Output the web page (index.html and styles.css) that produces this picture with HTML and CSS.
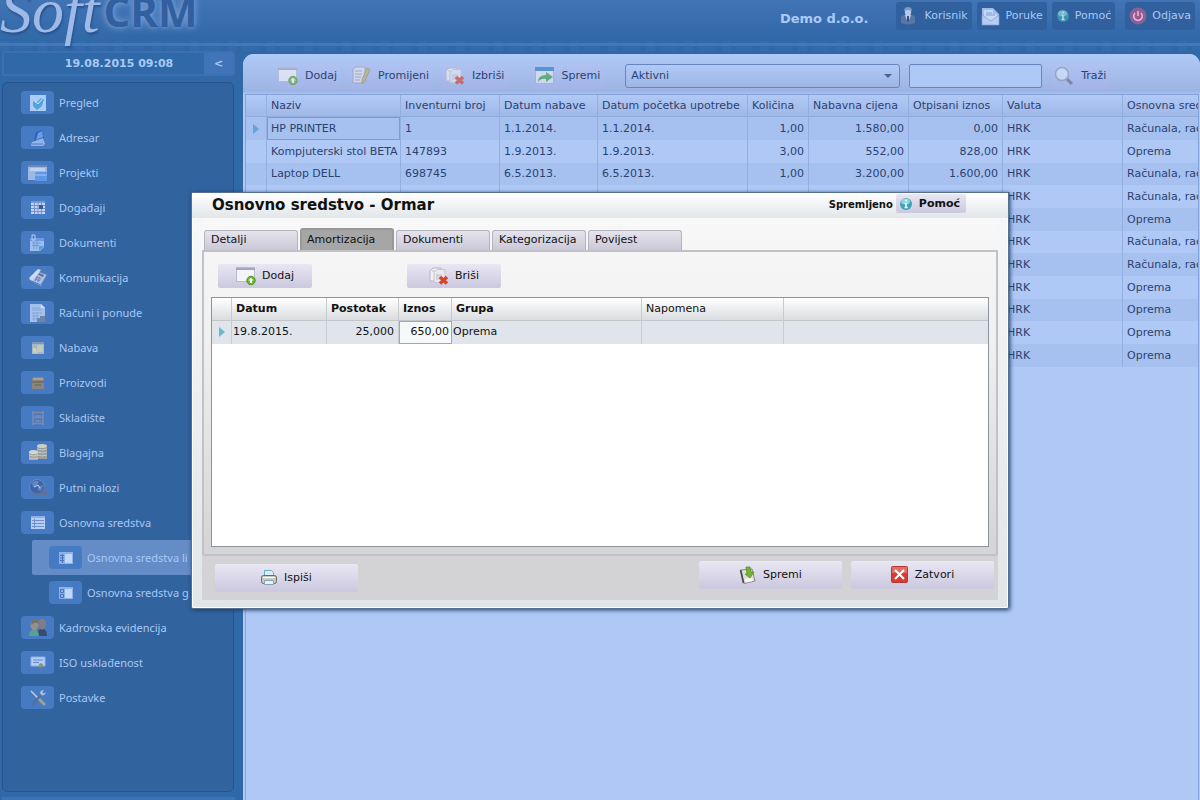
FILE: index.html
```
<!DOCTYPE html>
<html lang="hr">
<head>
    <meta charset="UTF-8">
    <meta name="viewport" content="width=device-width, initial-scale=1.0">
    <title>Soft CRM</title>
    <link rel="stylesheet" href="styles.css">
</head>
<body>
    <!-- shared icons -->
    <svg class="sprite" aria-hidden="true">
        <symbol id="i-add" viewBox="0 0 20 18">
            <rect x="0.5" y="0.5" width="18" height="14" fill="#f4f5fa" stroke="#b9bccb"/>
            <path d="M0 1h19v2H0z" fill="#a3a5b8"/>
            <circle cx="15" cy="13.5" r="4.2" fill="#6cb82f" stroke="#4a9418"/>
            <path d="M15 10.8l2.6 2.7h-1.6v2.4h-2v-2.4h-1.6z" fill="#fff"/>
        </symbol>
        <symbol id="i-delete" viewBox="0 0 20 18">
            <path d="M1 4l3-3h8v13H1z" fill="#f1f1f5" stroke="#b4b4c0"/>
            <path d="M5 5.500l3-3h8v13H5z" fill="#e8e8ee" stroke="#c4c4ce"/>
            <path d="M3 4h3M7 8h6M7 10h6M7 12h4" stroke="#bcbcc8"/>
            <path d="M11 10l7 6.500M18 10l-7 6.500" stroke="#dc4329" stroke-width="3.500"/>
        </symbol>
        <symbol id="i-info" viewBox="0 0 14 14">
            <circle cx="7" cy="7" r="6" fill="#3fa3b8"/>
            <ellipse cx="6.500" cy="4.500" rx="4.500" ry="3" fill="#8fd3dc"/>
            <path d="M7 6v4.500M5.800 6.500H7M5.600 10.500h3" stroke="#fff" stroke-width="1.400"/>
            <circle cx="7.200" cy="3.600" r="1" fill="#fff"/>
        </symbol>
    </svg>

    <header class="top">
        <div class="logo"><span class="logo-soft">Soft</span><span class="logo-crm">CRM</span></div>
        <strong class="company">Demo d.o.o.</strong>
        <nav class="top-nav">
            <button type="button" class="user">
                <svg width="16" height="18" viewBox="0 0 16 18"><path d="M1 10q1-2 4-2h6q3 0 4 2v6q-7 3-14 0z" fill="#5877a6"/><path d="M5 8h6l-3 8z" fill="#c5d6f2"/><path d="M7 9h2v5l-1 2-1-2z" fill="#35507f"/><ellipse cx="8" cy="5" rx="3.200" ry="4" fill="#b5c8ea"/><path d="M4 4q0-4 4-4t4 4q-4-2-8 0z" fill="#7d97c2"/></svg>
                Korisnik
            </button>
            <button type="button">
                <svg width="20" height="19" viewBox="0 0 20 19"><path d="M1 1h11l6 6v11H1z" fill="#9fbdea"/><path d="M3 3h9v4h4v6H3z" fill="#c4d8f6"/><path d="M5 6h6M5 8h9" stroke="#7f9fd3"/><path d="M1 8l9 6 8-6v10H1z" fill="#b5cdf3" stroke="#7f9fd3" stroke-width=".7"/></svg>
                Poruke
            </button>
            <button type="button">
                <svg width="14" height="14" opacity=".75"><use href="#i-info"/></svg>
                Pomoć
            </button>
            <button type="button" class="logout">
                <svg width="18" height="18" viewBox="0 0 18 18"><circle cx="9" cy="9" r="8.500" fill="#77689f"/><circle cx="9" cy="9" r="7" fill="#a3568a"/><path d="M6 6a4.300 4.300 0 1 0 6 0M9 4v5" fill="none" stroke="#c9c8ec" stroke-width="1.500"/></svg>
                Odjava
            </button>
        </nav>
    </header>

    <div class="layout">
        <aside class="side">
            <div class="date-bar">
                <time datetime="2015-08-19T09:08">19.08.2015 09:08</time>
                <button type="button">&lt;</button>
            </div>
            <ul class="menu">
                <li><a href="#"><span class="tile"><svg width="18" height="18" viewBox="0 0 18 18"><path d="M1 1h16v16H1z" fill="#a9cdf5"/><path d="M4 7l3 2 5-5 3 1-2 7-5 4-4-4z" fill="#54a1de"/><path d="M6 7l3 3 5-6" fill="none" stroke="#d1e6fb"/></svg></span>Pregled</a></li>
                <li><a href="#"><span class="tile"><svg width="18" height="18" viewBox="0 0 18 18"><path d="M7 3l6-2 2 9-11 5z" fill="#2d62c0"/><path d="M9 4l4-2 1 6-7 3z" fill="#6b9ce6"/><path d="M3 13l11-4 2 6-2 2H2z" fill="#92b3e6"/><path d="M3 15h11" stroke="#5b7db8"/></svg></span>Adresar</a></li>
                <li><a href="#"><span class="tile"><svg width="20" height="18" viewBox="0 0 20 18"><path d="M0 1h19v15H0z" fill="#9db8e2"/><path d="M0 1h19v2H0z" fill="#6f86b3"/><path d="M2 4h15v3H2z" fill="#bdd2f3"/><path d="M7 9l2-1h10v9H7z" fill="#5f97e8"/><path d="M7 10h12v2H7z" fill="#82b1f2"/></svg></span>Projekti</a></li>
                <li><a href="#"><span class="tile"><svg width="16" height="15" viewBox="0 0 16 15"><path d="M1 1h14v13H1z" fill="#c2d4f3"/><path d="M1 1h14v2H1z" fill="#7698d2"/><path d="M1 5.500h14M1 8.500h14M1 11.500h14M4.500 3v11M8 3v11M11.500 3v11" stroke="#7493ca"/><path d="M9 5h4v4H9z" fill="#3b5b98"/></svg></span>Događaji</a></li>
                <li><a href="#"><span class="tile"><svg width="17" height="18" viewBox="0 0 17 18"><path d="M1 4h14v9l-4 4H1z" fill="#9ebeee"/><path d="M1 4h14v3H1z" fill="#6e9be0"/><path d="M3 1h3v5H3z" fill="none" stroke="#b7cdf1"/><path d="M3 9h9M3 11.500h7M5 7v8M8 7v8" stroke="#7399d5"/><path d="M10 17v-5h5z" fill="#4aa2dc"/></svg></span>Dokumenti</a></li>
                <li><a href="#"><span class="tile"><svg width="20" height="19" viewBox="0 0 20 19"><path d="M8 3l11 4-6 11-12-6z" fill="#a9bfe5"/><path d="M1 10L10 1l3 1-9 11z" fill="#cddcf5"/><path d="M1 12l12 5 6-10" fill="none" stroke="#5d79aa"/><path d="M11 5l5 2-1 2-5-2z" fill="#7b6c84"/><path d="M8 9l5 2M7 11l5 2M9.500 8L7 13M12 9l-2.500 5" stroke="#6985ba"/></svg></span>Komunikacija</a></li>
                <li><a href="#"><span class="tile"><svg width="18" height="20" viewBox="0 0 18 20"><path d="M1 1h11l4 4v14H1z" fill="#a4c1ec"/><path d="M12 1v4h4" fill="#d2e1f8"/><path d="M3 5h8M3 7h10M3 10h10M3 13h7M3 16h5M5 9v9M8 9v9" stroke="#86a6db"/><path d="M8 15h3v-2h5v6H8z" fill="#7185a8"/></svg></span>Računi i ponude</a></li>
                <li><a href="#"><span class="tile"><svg width="14" height="14" viewBox="0 0 14 14"><path d="M1 1h12v12H1z" fill="#a7b8c9"/><path d="M1 1h12v2H1z" fill="#8196b8"/><path d="M2 7h3v5H2zM6 4h6v7H6z" fill="#c1cbb5"/><path d="M3 7l3 5M2 9h3" stroke="#ded9a2"/></svg></span>Nabava</a></li>
                <li><a href="#"><span class="tile"><svg width="14" height="14" viewBox="0 0 14 14"><path d="M2 1h10l1 2v10H1V3z" fill="#8c8579"/><path d="M2 2h10v2H2z" fill="#aaa18d"/><path d="M1 6h12M4 9h6" stroke="#615f66"/></svg></span>Proizvodi</a></li>
                <li><a href="#"><span class="tile"><svg width="12" height="14" viewBox="0 0 12 14"><path d="M1 0v14M11 0v14M1 1.500h10M1 6.500h10M1 12.500h10" fill="none" stroke="#8289a8" stroke-width="1.500"/><path d="M3 4h6v2H3zM3 9h6v2H3z" fill="#6d87b8"/></svg></span>Skladište</a></li>
                <li><a href="#"><span class="tile"><svg width="20" height="19" viewBox="0 0 20 19"><path d="M9 3v13h10V3z" fill="#979ea1"/><path d="M1 9v8h9V9z" fill="#a5aaa9"/><path d="M9 6q5 2 10 0M9 9q5 2 10 0M9 12q5 2 10 0M1 12q5 2 9 0M1 15q5 2 9 0" fill="none" stroke="#c6c8c2"/><ellipse cx="14" cy="3" rx="5" ry="2" fill="#cccdc5"/><ellipse cx="5.500" cy="9" rx="4.500" ry="2" fill="#d5d5cb"/></svg></span>Blagajna</a></li>
                <li><a href="#"><span class="tile"><svg width="20" height="19" viewBox="0 0 20 19"><circle cx="9" cy="9" r="7.500" fill="#3d65ad" stroke="#6e89ba"/><path d="M4 5q4-4 7-1l-3 4-3 1zM10 9l5-2-2 6-3-1z" fill="#6485c0"/><path d="M6 9l4-2 2 3" fill="none" stroke="#c8d7ef"/><path d="M5 15q8 4 12-6M14 15l4-1v3z" fill="none" stroke="#65708c" stroke-width="1.500"/></svg></span>Putni nalozi</a></li>
                <li><a href="#"><span class="tile"><svg width="14" height="13" viewBox="0 0 14 13"><path d="M0 0h14v13H0z" fill="#b8cdf2"/><path d="M0 0h14v2H0z" fill="#8fb0e5"/><path d="M1 4.500h12M1 7.500h12M1 10.500h12M3.500 3v9" stroke="#6c90cd"/></svg></span>Osnovna sredstva</a>
                    <ul class="submenu">
                        <li class="current"><a href="#"><span class="tile"><svg width="14" height="12" viewBox="0 0 14 12"><path d="M0 0h14v12H0z" fill="#8cb0e8"/><path d="M6 2h7v9H6z" fill="#c1d8fa"/><path d="M1 3.500h4M1 6h4M1 8.500h4M3.500 2v9" stroke="#4b75bb"/></svg></span>Osnovna sredstva li</a></li>
                        <li><a href="#"><span class="tile"><svg width="14" height="12" viewBox="0 0 14 12"><path d="M0 0h14v12H0z" fill="#8cb0e8"/><path d="M6 2h7v9H6z" fill="#c1d8fa"/><path d="M1.500 2.500h3v3h-3zM1.500 7.500h3v3h-3z" fill="none" stroke="#4b75bb"/></svg></span>Osnovna sredstva g</a></li>
                    </ul>
                </li>
                <li><a href="#"><span class="tile"><svg width="20" height="19" viewBox="0 0 20 19"><path d="M10 18q-1-5 2-7h4q3 2 3 7z" fill="#3a4b6b"/><ellipse cx="14" cy="6" rx="4" ry="5.500" fill="#837d83"/><path d="M1 18q0-6 5-6t5 6z" fill="#57a58e"/><ellipse cx="6.500" cy="7" rx="4" ry="5.500" fill="#968f8a"/><path d="M3 7q0-6 4-6t4 5q-4-3-8 1z" fill="#77716c"/></svg></span>Kadrovska evidencija</a></li>
                <li><a href="#"><span class="tile"><svg width="16" height="14" viewBox="0 0 16 14"><path d="M1 1h14v9H1z" fill="#b8cef2" stroke="#8fafe3"/><path d="M3 4h10M3 6.500h6" stroke="#648bcc"/><circle cx="11" cy="9.500" r="2.200" fill="#8d9180"/><path d="M10 11v3l1-1 1 1v-3z" fill="#777d77"/></svg></span>ISO usklađenost</a></li>
                <li><a href="#"><span class="tile"><svg width="18" height="18" viewBox="0 0 18 18"><path d="M2 2l9 9" stroke="#c1cee2" stroke-width="1.500"/><path d="M10 10l6 6" stroke="#9aa58a" stroke-width="3"/><path d="M3 16L13 5" stroke="#52709b" stroke-width="2.500"/><path d="M15 1q-4 0-4 3.500l2 2q3 0 4-3l-2.500 1-1-1z" fill="#a9c0e3"/></svg></span>Postavke</a></li>
            </ul>
            <div class="side-foot"></div>
        </aside>

        <main class="panel">
            <div class="toolbar">
                <button type="button" class="t-add"><svg width="20" height="18"><use href="#i-add"/></svg>Dodaj</button>
                <button type="button" class="t-edit"><svg width="19" height="19" viewBox="0 0 19 19"><path d="M1 3l3-2h9v16H1z" fill="#e3e5ec" stroke="#9a9eac"/><path d="M3 5h7M3 8h7M3 11h6M3 14h5" stroke="#9a9eac"/><path d="M15 2l3 1.500-5 11-3 3v-4z" fill="#c9b45a" stroke="#85805f" stroke-width=".7"/></svg>Promijeni</button>
                <button type="button" class="t-del"><svg width="20" height="18"><use href="#i-delete"/></svg>Izbriši</button>
                <button type="button" class="t-save"><svg width="19" height="17" viewBox="0 0 19 17"><path d="M.5.500h18v16H.5z" fill="#e6e9ef" stroke="#a8b0c0"/><path d="M0 0h19v4H0z" fill="#2f7fc4"/><path d="M3 15q0-7 8-7V5l7 5-7 5v-3q-5-1-8 3z" fill="#3aa648"/></svg>Spremi</button>
                <span class="select"><select aria-label="Status"><option>Aktivni</option></select></span>
                <input type="text" class="search" aria-label="Traži">
                <button type="button" class="t-find"><svg width="20" height="19" viewBox="0 0 20 19"><path d="M12 12l6 6" stroke="#686c86" stroke-width="3"/><circle cx="8" cy="8" r="6.500" fill="#d3e6f8" stroke="#8d99b4" stroke-width="1.500"/></svg>Traži</button>
            </div>

            <div class="grid-wrap">
                <table class="grid">
                    <colgroup>
                        <col class="w21"><col class="w134"><col class="w99"><col class="w98"><col class="w150"><col class="w61"><col class="w100"><col class="w94"><col class="w120"><col>
                    </colgroup>
                    <thead>
                        <tr><th></th><th>Naziv</th><th>Inventurni broj</th><th>Datum nabave</th><th>Datum početka upotrebe</th><th>Količina</th><th>Nabavna cijena</th><th>Otpisani iznos</th><th>Valuta</th><th>Osnovna sredstva</th></tr>
                    </thead>
                    <tbody>
                        <tr><td><i class="marker"></i></td><td class="focused">HP PRINTER</td><td>1</td><td>1.1.2014.</td><td>1.1.2014.</td><td class="num">1,00</td><td class="num">1.580,00</td><td class="num">0,00</td><td>HRK</td><td>Računala, računalna</td></tr>
                        <tr><td></td><td>Kompjuterski stol BETA</td><td>147893</td><td>1.9.2013.</td><td>1.9.2013.</td><td class="num">3,00</td><td class="num">552,00</td><td class="num">828,00</td><td>HRK</td><td>Oprema</td></tr>
                        <tr><td></td><td>Laptop DELL</td><td>698745</td><td>6.5.2013.</td><td>6.5.2013.</td><td class="num">1,00</td><td class="num">3.200,00</td><td class="num">1.600,00</td><td>HRK</td><td>Računala, računalna</td></tr>
                        <tr><td></td><td></td><td></td><td></td><td></td><td></td><td></td><td></td><td>HRK</td><td>Računala, računalna</td></tr>
                        <tr><td></td><td></td><td></td><td></td><td></td><td></td><td></td><td></td><td>HRK</td><td>Oprema</td></tr>
                        <tr><td></td><td></td><td></td><td></td><td></td><td></td><td></td><td></td><td>HRK</td><td>Računala, računalna</td></tr>
                        <tr><td></td><td></td><td></td><td></td><td></td><td></td><td></td><td></td><td>HRK</td><td>Računala, računalna</td></tr>
                        <tr><td></td><td></td><td></td><td></td><td></td><td></td><td></td><td></td><td>HRK</td><td>Oprema</td></tr>
                        <tr><td></td><td></td><td></td><td></td><td></td><td></td><td></td><td></td><td>HRK</td><td>Oprema</td></tr>
                        <tr><td></td><td></td><td></td><td></td><td></td><td></td><td></td><td></td><td>HRK</td><td>Oprema</td></tr>
                        <tr><td></td><td></td><td></td><td></td><td></td><td></td><td></td><td></td><td>HRK</td><td>Oprema</td></tr>
                    </tbody>
                </table>
            </div>
        </main>
    </div>

    <div class="overlay">
        <section class="modal" role="dialog" aria-labelledby="modalTitle">
            <div class="modal-head">
                <h2 id="modalTitle">Osnovno sredstvo - Ormar</h2>
                <span class="status">Spremljeno</span>
                <button type="button" class="btn help"><svg width="14" height="14"><use href="#i-info"/></svg>Pomoć</button>
            </div>
            <div class="modal-body">
                <div class="tabs" role="tablist">
                    <button type="button" role="tab">Detalji</button>
                    <button type="button" role="tab" class="active" aria-selected="true">Amortizacija</button>
                    <button type="button" role="tab">Dokumenti</button>
                    <button type="button" role="tab">Kategorizacija</button>
                    <button type="button" role="tab">Povijest</button>
                </div>
                <div class="tab-panel">
                    <div class="actions">
                        <button type="button" class="btn"><svg width="20" height="18"><use href="#i-add"/></svg>Dodaj</button>
                        <button type="button" class="btn"><svg width="20" height="18"><use href="#i-delete"/></svg>Briši</button>
                    </div>
                    <div class="items">
                        <table>
                            <colgroup>
                                <col class="w20"><col class="w95"><col class="w72"><col class="w53"><col class="w190"><col class="w142"><col>
                            </colgroup>
                            <thead>
                                <tr><th></th><th>Datum</th><th>Postotak</th><th>Iznos</th><th>Grupa</th><th class="plain">Napomena</th><th></th></tr>
                            </thead>
                            <tbody>
                                <tr><td><i class="marker"></i></td><td>19.8.2015.</td><td class="num">25,000</td><td class="num focused">650,00</td><td>Oprema</td><td></td><td></td></tr>
                            </tbody>
                        </table>
                    </div>
                </div>
                <div class="modal-foot">
                    <button type="button" class="btn print"><svg width="16" height="17" viewBox="0 0 16 17"><path d="M3.500 7V1.500h7l2 2V7z" fill="#d9effb" stroke="#6fa9c9"/><rect x=".5" y="6.500" width="15" height="8" rx="2" fill="#c9c9c5" stroke="#686868"/><path d="M2 8.500h12" stroke="#fff"/><path d="M3.500 11.500h9v4h-9z" fill="#e4f3fa" stroke="#85a5b5"/></svg>Ispiši</button>
                    <button type="button" class="btn"><svg width="17" height="18" viewBox="0 0 17 18"><path d="M2 4l11-1 3 12-11 2.500z" fill="#dededb" stroke="#888"/><path d="M1.500 4l3 13" stroke="#444" stroke-width="1.500"/><path d="M6 13l7-1.500 1 3.500-7 1.500z" fill="#f7f7f4"/><path d="M7 1h4l1 5h3l-4 6-5-4h2z" fill="#73b437" stroke="#4c8a20" stroke-width=".7"/></svg>Spremi</button>
                    <button type="button" class="btn"><svg width="17" height="17" viewBox="0 0 17 17"><rect x=".5" y=".5" width="16" height="16" rx="1" fill="#d93a33" stroke="#b03a33"/><path d="M1 1h15v6H1z" fill="#e56e63"/><path d="M4 4l9 9M13 4l-9 9" stroke="#fff" stroke-width="2"/></svg>Zatvori</button>
                </div>
            </div>
        </section>
    </div>
</body>
</html>
```
FILE: styles.css
```
* {
    box-sizing: border-box;
}
body {
    margin: 0;
    height: 100vh;
    display: flex;
    flex-direction: column;
    overflow: hidden;
    background: #3069a8;
    font-family: Verdana, "DejaVu Sans", sans-serif;
    font-size: 11px;
    line-height: 14px;
    color: #2b426f;
}
button, input, select {
    font: inherit;
    color: inherit;
}
button {
    display: flex;
    align-items: center;
    border: none;
    padding: 0;
    background: none;
    cursor: pointer;
}
svg {
    flex: none;
}
.sprite {
    position: absolute;
    width: 0;
    height: 0;
}

/* header */
.top {
    display: flex;
    align-items: flex-start;
    height: 54px;
    padding-right: 5px;
    background:
        linear-gradient(#4277b8, #4277b8) 0 43px / 100% 3px no-repeat,
        repeating-linear-gradient(90deg, #3c71b066 0 9px, transparent 9px 14px, #3c71b044 14px 31px, transparent 31px 38px) 0 41px / 100% 10px no-repeat,
        linear-gradient(#4174b5, #2f67a7 80%);
}
.logo {
    display: flex;
    align-items: flex-start;
    gap: 4px;
    line-height: 21px;
    white-space: nowrap;
}
.logo-soft {
    font-family: "Liberation Serif", serif;
    font-style: italic;
    font-size: 64px;
    color: #9fb9e8;
    text-shadow: 1px 2px 2px #28528c;
}
.logo-crm {
    font-family: "Open Sans", sans-serif;
    font-weight: bold;
    font-size: 42px;
    color: #315f9f;
    text-shadow: 0 0 4px #6f97d2, 0 0 8px #7fa3da;
}
.company {
    margin: 10px 27px 0 auto;
    font-size: 13px;
    line-height: 18px;
    color: #adc9f5;
}
.top-nav {
    display: flex;
    gap: 5px;
    padding-top: 2px;
}
.top-nav button {
    gap: 5px;
    height: 28px;
    padding: 0 4px;
    border-radius: 3px;
    background: #30609e;
    color: #a9c8f5;
}
.top-nav .user {
    gap: 9px;
}
.top-nav .logout {
    margin-left: 5px;
}

.layout {
    display: flex;
    flex: 1;
    min-height: 0;
}

/* sidebar */
.side {
    display: flex;
    flex-direction: column;
    flex: none;
    width: 243px;
    margin-top: -3px;
    padding: 0 8px 0 2px;
}
.date-bar {
    display: flex;
    height: 25px;
    border: 2px solid #3c70b2;
    border-radius: 3px;
    color: #a9c8f5;
    font-weight: bold;
    line-height: 21px;
}
.date-bar time {
    flex: 1;
    text-align: center;
    padding-left: 30px;
}
.date-bar button {
    justify-content: center;
    width: 29px;
    background: #3f74b8;
}
.menu {
    flex: 1;
    margin: 6px 1px 5px 0;
    padding: 2px 0 0;
    border: 1px solid #27528d;
    border-radius: 5px;
    background: #31639f;
    font-family: "Noto Sans", sans-serif;
    list-style: none;
    overflow: hidden;
}
.menu a {
    display: flex;
    align-items: center;
    gap: 5px;
    height: 35px;
    padding-left: 18px;
    color: #a9c8f5;
    text-decoration: none;
    white-space: nowrap;
}
.tile {
    display: flex;
    align-items: center;
    justify-content: center;
    width: 33px;
    height: 23px;
    border-radius: 4px;
    background: #467ac3;
}
.submenu {
    margin: 0 0 0 29px;
    padding: 0;
    list-style: none;
}
.submenu a {
    padding-left: 17px;
}
.current {
    border-radius: 2px;
    background: #648dc8;
}
.side-foot {
    height: 3px;
    background: #3d73b5;
}

/* main list */
.panel {
    display: flex;
    flex-direction: column;
    flex: 1;
    min-width: 0;
    padding: 0 1px 0 2px;
    border-radius: 11px 11px 0 0;
    background: #afc8f5;
}
.toolbar {
    display: flex;
    align-items: center;
    height: 40px;
    margin: 0 -1px 0 -2px;
    padding: 5px 0 0 32px;
    border-bottom: 2px solid #a4bdec;
    border-radius: 11px 11px 0 0;
    background: linear-gradient(#b1c9f7, #9db4e3);
}
.toolbar button {
    gap: 7px;
    height: 26px;
    padding: 0 3px;
    border-radius: 2px;
    background: linear-gradient(#afc3f2, #a3b4e8);
    white-space: nowrap;
}
.toolbar button svg {
    opacity: .65;
}
.t-edit {
    margin-left: 9px;
}
.t-del {
    margin-left: 10px;
}
.t-save {
    margin-left: 25px;
}
.select {
    position: relative;
    width: 275px;
    margin-left: 22px;
}
.select select {
    display: block;
    appearance: none;
    width: 100%;
    height: 24px;
    padding: 0 5px;
    border: 1px solid #6686bd;
    border-radius: 3px;
    background: linear-gradient(#b1c9f7, #9db6e5);
}
.select::after {
    content: "";
    position: absolute;
    right: 8px;
    top: 10px;
    border: 4px solid transparent;
    border-top-color: #486797;
    border-bottom: none;
    pointer-events: none;
}
.search {
    width: 133px;
    height: 24px;
    margin: 0 9px 0 9px;
    border: 1px solid #6686bd;
    border-radius: 2px;
    background: #afc9f6;
}
.grid-wrap {
    flex: 1;
    overflow: hidden;
    border: 1px solid #86a4d8;
    border-bottom: none;
}
table {
    width: 100%;
    table-layout: fixed;
    border-collapse: separate;
    border-spacing: 0;
}
th, td {
    height: 23px;
    padding: 0 4px;
    overflow: hidden;
    text-align: left;
    font-weight: normal;
    white-space: nowrap;
}
.num {
    text-align: right;
}
.grid th, .grid td {
    border-right: 1px solid #92afe0;
}
.grid th {
    height: 22px;
    border-bottom: 1px solid #8fabdc;
    background: linear-gradient(#b1c9f7, #a0b8e7);
}
.grid tbody tr:nth-child(odd) {
    background: #a6c1ef;
}
.grid tbody tr:nth-child(3n) td {
    height: 22px;
}
.grid th:last-child, .grid td:last-child {
    border-right: none;
}
.grid .focused {
    box-shadow: inset 0 0 0 1px #6fa0da;
}
.marker {
    display: block;
    width: 0;
    margin-left: 3px;
    border: 5px solid transparent;
    border-left: 6px solid #5fa5dd;
    border-right: none;
}
.w20 { width: 20px; }
.w21 { width: 21px; }
.w53 { width: 53px; }
.w61 { width: 61px; }
.w72 { width: 72px; }
.w94 { width: 94px; }
.w95 { width: 95px; }
.w98 { width: 98px; }
.w99 { width: 99px; }
.w100 { width: 100px; }
.w120 { width: 120px; }
.w134 { width: 134px; }
.w142 { width: 142px; }
.w150 { width: 150px; }
.w190 { width: 190px; }

/* dialog */
.overlay {
    position: fixed;
    inset: 0;
    display: flex;
    align-items: center;
    justify-content: center;
}
.modal {
    width: 818px;
    max-width: 100%;
    border: 1px solid #56718f;
    border-radius: 2px;
    padding-bottom: 8px;
    background: linear-gradient(#f7f8f9, #e1e5e8);
    box-shadow: inset 0 0 0 1px #fff, 1px 1px 4px #1d3a66;
    color: #111;
}
.modal-head {
    display: flex;
    align-items: center;
    height: 25px;
    padding: 0 42px 0 20px;
    background: linear-gradient(#fff, #e1e6e8);
}
.modal-head h2 {
    margin: 0 auto 0 0;
    font-size: 15px;
    line-height: 20px;
}
.status {
    margin-right: 3px;
    font-size: 10px;
    font-weight: bold;
}
.btn {
    justify-content: center;
    border-radius: 2px;
    background: linear-gradient(#e9e7f3, #cbc8df);
}
.help {
    gap: 6px;
    height: 19px;
    padding: 0 6px 0 3px;
    margin-bottom: 3px;
    font-weight: bold;
}
.modal-body {
    margin: 0 10px;
    padding-top: 10px;
    background: linear-gradient(#f8f8f9, #f1f1f2 30%, #d3d3d5 90%);
}
.tabs {
    display: flex;
    align-items: flex-end;
    gap: 2px;
    padding-left: 2px;
}
.tabs button {
    width: 94px;
    height: 20px;
    padding-left: 6px;
    border: 1px solid #b5b4bd;
    border-bottom: none;
    border-radius: 3px 3px 0 0;
    background: linear-gradient(#e5e4ec, #cac8d8);
}
.tabs .active {
    height: 22px;
    padding-left: 5px;
    border: 2px solid #999;
    border-bottom: none;
    background: #a6a6a6;
}
.tab-panel {
    padding: 12px 7px 7px;
    border: 2px solid #c2c1c8;
    border-radius: 0 0 3px 3px;
}
.actions {
    display: flex;
    gap: 95px;
    padding-left: 7px;
    margin-bottom: 9px;
}
.actions .btn {
    gap: 6px;
    width: 94px;
    height: 24px;
}
.items {
    height: 250px;
    border: 1px solid #8b949c;
    background: #fff;
}
.items th {
    border-right: 1px solid #c8cccf;
    border-bottom: 1px solid #c3c7ca;
    background: linear-gradient(#fff, #dadde0);
    font-weight: bold;
}
.items .plain {
    font-weight: normal;
}
.items td {
    padding: 0 4px 0 1px;
    border-right: 1px solid #c8cdd2;
    background: #e0e5eb;
}
.items th:last-child, .items td:last-child {
    border-right: none;
}
.items .focused {
    border: 1px solid #74b9c6;
    background: #f6f9fa;
    padding-right: 2px;
}
.items .marker {
    margin-left: 6px;
    border-left-color: #68b9cf;
}
.modal-foot {
    display: flex;
    gap: 9px;
    padding: 5px 4px 8px 13px;
}
.modal-foot .btn {
    gap: 7px;
    width: 143px;
    height: 28px;
}
.modal-foot .print {
    margin: 3px auto 0 0;
}
```
